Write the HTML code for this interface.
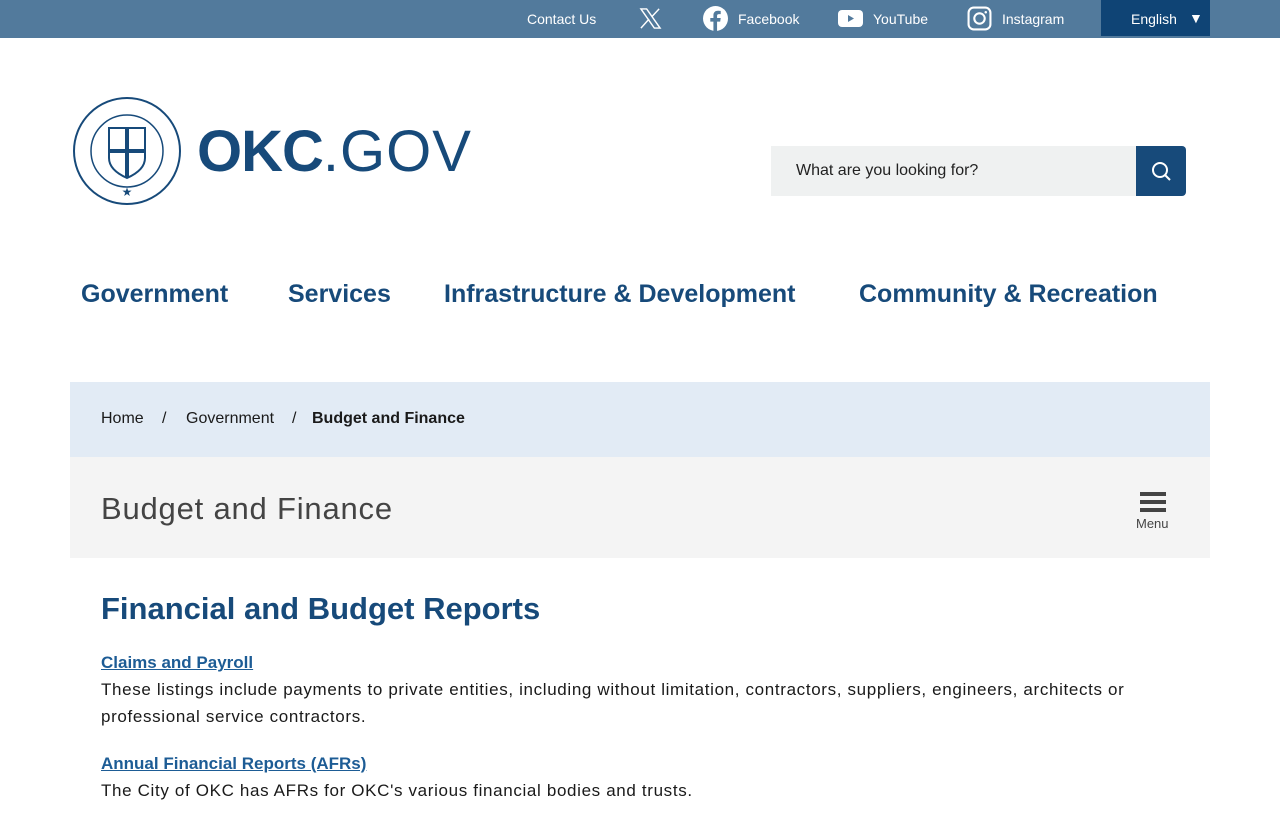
<!DOCTYPE html>
<html><head><style>
*{margin:0;padding:0;box-sizing:border-box}
body{width:1280px;height:800px;overflow:hidden;background:#fff;font-family:"Liberation Sans",sans-serif;color:#1a1a1a}
.top{height:38px;background:#527a9c;position:relative;color:#fff;font-size:14px}
.top span{position:absolute;top:11px}
.lang{position:absolute;left:1101px;top:0;width:109px;height:36px;background:#0f4475;color:#fff;font-size:14px}
.nav a{position:absolute;top:280px;font-size:25px;font-weight:bold;color:#174a7a;text-decoration:none}
.bc{position:absolute;left:70px;top:382px;width:1140px;height:75px;background:#e2ebf5;font-size:16px}
.bc span{position:absolute;top:28px}
.ph{position:absolute;left:70px;top:457px;width:1140px;height:101px;background:#f4f4f4}
h1{position:absolute;left:31px;top:34px;font-size:31px;font-weight:normal;color:#444;letter-spacing:.8px}
.main{position:absolute;left:101px;top:591px;width:1075px}
h2{font-size:31px;color:#174a7a;margin-bottom:26px}
.main a{color:#1d5c95;font-weight:bold;font-size:17px;text-decoration:underline;display:block;margin-bottom:4px}
.main p{font-size:17px;line-height:27px;letter-spacing:.65px;margin-bottom:24px;margin-top:-1px}
</style></head><body>
<div class="top">
<span style="left:527px">Contact Us</span>
<svg style="position:absolute;left:639px;top:7px" width="23" height="23" viewBox="0 0 24 24"><path d="M2 2h6l14 20h-6z M2 22L10.5 12.5M13.5 10L21 2" stroke="#fff" stroke-width="1.5" fill="none"/></svg>
<svg style="position:absolute;left:703px;top:6px" width="25" height="25" viewBox="0 0 24 24"><circle cx="12" cy="12" r="12" fill="#fff"/><path d="M13.5 24v-9h3l.5-3.5h-3.5V9.5c0-1 .4-1.7 1.8-1.7H17V4.8c-.4 0-1.5-.2-2.7-.2-2.7 0-4.3 1.6-4.3 4.5v2.4H7V15h3v9z" fill="#527a9c"/></svg>
<span style="left:738px">Facebook</span>
<svg style="position:absolute;left:838px;top:10px" width="25" height="17" viewBox="0 0 25 17"><rect width="25" height="17" rx="4" fill="#fff"/><path d="M10 5l6 3.5-6 3.5z" fill="#527a9c"/></svg>
<span style="left:873px">YouTube</span>
<svg style="position:absolute;left:967px;top:6px" width="25" height="25" viewBox="0 0 24 24"><rect x="1.5" y="1.5" width="21" height="21" rx="5" stroke="#fff" stroke-width="2" fill="none"/><circle cx="12" cy="12" r="5" stroke="#fff" stroke-width="2" fill="none"/><circle cx="18" cy="6" r="1.2" fill="#fff"/></svg>
<span style="left:1002px">Instagram</span>
<div class="lang"><span style="left:30px;top:11px">English</span><span style="left:88px;top:10px">▼</span></div>
</div>
<svg style="position:absolute;left:72px;top:96px" width="110" height="110" viewBox="0 0 110 110">
<circle cx="55" cy="55" r="53" fill="none" stroke="#174a7a" stroke-width="2"/><circle cx="55" cy="55" r="36" fill="none" stroke="#174a7a" stroke-width="1.5"/>
<path d="M37 32h36v30c0 10-9 16-18 20-9-4-18-10-18-20z" fill="none" stroke="#174a7a" stroke-width="2"/><path d="M55 32v50M37 55h36" stroke="#174a7a" stroke-width="4"/>
<text x="55" y="100" text-anchor="middle" font-size="12" fill="#174a7a">★</text></svg>
<div style="position:absolute;left:197px;top:118px;font-size:58px;color:#174a7a;letter-spacing:1px"><b style="letter-spacing:-1px">OKC</b>.GOV</div>
<div style="position:absolute;left:771px;top:146px;width:366px;height:50px;background:#eff1f1;font-size:16px;padding:16px 25px;color:#222">What are you looking for?</div>
<div style="position:absolute;left:1136px;top:146px;width:50px;height:50px;background:#174a7a;border-radius:0 4px 4px 0"><svg width="50" height="50"><circle cx="24" cy="24" r="7" stroke="#fff" stroke-width="2" fill="none"/><path d="M29 29l5 5" stroke="#fff" stroke-width="2"/></svg></div>
<div class="nav"><a style="left:81px">Government</a><a style="left:288px">Services</a><a style="left:444px">Infrastructure &amp; Development</a><a style="left:859px">Community &amp; Recreation</a></div>
<div class="bc"><span style="left:31px">Home</span><span style="left:92px">/</span><span style="left:116px">Government</span><span style="left:222px">/</span><span style="left:242px;font-weight:bold">Budget and Finance</span></div>
<div class="ph"><h1>Budget and Finance</h1>
<div style="position:absolute;left:1070px;top:35px;width:26px"><div style="height:4px;background:#444;margin-bottom:4px"></div><div style="height:4px;background:#444;margin-bottom:4px"></div><div style="height:4px;background:#444"></div></div>
<div style="position:absolute;left:1066px;top:59px;font-size:13px;color:#444">Menu</div></div>
<div class="main"><h2>Financial and Budget Reports</h2>
<a>Claims and Payroll</a><p>These listings include payments to private entities, including without limitation, contractors, suppliers, engineers, architects or professional service contractors.</p>
<a>Annual Financial Reports (AFRs)</a><p>The City of OKC has AFRs for OKC's various financial bodies and trusts.</p></div>
</body></html>
